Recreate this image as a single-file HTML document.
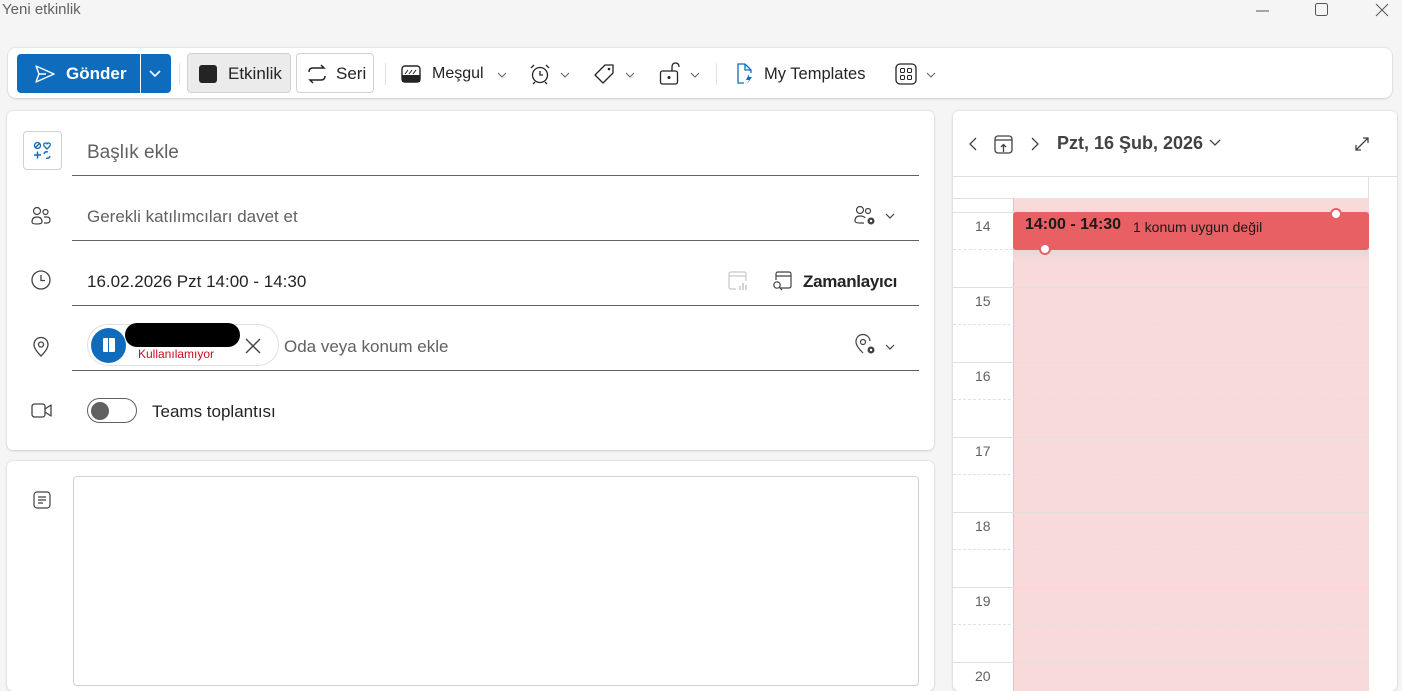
<!DOCTYPE html>
<html><head><meta charset="utf-8"><style>
*{box-sizing:border-box;margin:0;padding:0}
body{width:1402px;height:672px;overflow:hidden;background:#f5f5f5;font-family:"Segoe UI","Liberation Sans",sans-serif;color:#242424;position:relative}
.a{position:absolute}
.card{position:absolute;background:#fff;border-radius:6px;box-shadow:0 0 2px rgba(0,0,0,.15),0 1px 2px rgba(0,0,0,.1)}
.t{position:absolute;white-space:nowrap}
.line{position:absolute;left:72px;width:847px;height:1px;background:#616161}
svg{position:absolute;overflow:visible}
.hr{position:absolute;left:0;width:416px;height:1px;background:#e0e0e0}
.hd{position:absolute;left:60px;width:356px;height:0;border-top:1px dashed #e0e0e0}
.hl{position:absolute;left:22px;font-size:14px;color:#616161}
</style></head><body>
<div class="t" style="left:2px;top:1px;font-size:15px;color:#616161">Yeni etkinlik</div>
<svg style="left:1256px;top:10px" width="14" height="2"><path d="M0 1H13" stroke="#555"/></svg>
<svg style="left:1315px;top:3px" width="14" height="14"><rect x=".5" y=".5" width="12" height="12" rx="2" fill="none" stroke="#555"/></svg>
<svg style="left:1375px;top:3px" width="14" height="14"><path d="M1 1L13 13M13 1L1 13" stroke="#555"/></svg>

<div class="card" style="left:8px;top:48px;width:1384px;height:50px;border-radius:8px"></div>
<div class="a" style="left:17px;top:54px;width:154px;height:39px;background:#0f6cbd;border-radius:4px"></div>
<div class="a" style="left:140px;top:54px;width:1px;height:39px;background:#fff"></div>
<svg style="left:34px;top:64px" width="22" height="20"><path d="M2 2L20 10L2 18L5 10Z M5 10H12" fill="none" stroke="#fff" stroke-width="1.4" stroke-linejoin="round"/></svg>
<div class="t" style="left:66px;top:64px;font-size:17px;font-weight:bold;color:#fff">Gönder</div>
<svg style="left:149px;top:70px" width="12" height="8"><path d="M1 1L6 6L11 1" fill="none" stroke="#fff" stroke-width="1.6"/></svg>
<div class="a" style="left:179px;top:63px;width:1px;height:22px;background:#e0e0e0"></div>
<div class="a" style="left:187px;top:53px;width:104px;height:40px;background:#ebebeb;border:1px solid #d1d1d1;border-radius:4px"></div>
<div class="a" style="left:199px;top:65px;width:18px;height:18px;background:#242424;border-radius:3px"></div>
<div class="t" style="left:228px;top:64px;font-size:17px">Etkinlik</div>
<div class="a" style="left:296px;top:53px;width:78px;height:40px;background:#fff;border:1px solid #d1d1d1;border-radius:4px"></div>
<svg style="left:306px;top:64px" width="22" height="20"><path d="M3 8Q3 4 7 4H18L15 1M19 12Q19 16 15 16H4L7 19" fill="none" stroke="#242424" stroke-width="1.5"/></svg>
<div class="t" style="left:336px;top:64px;font-size:17px">Seri</div>
<div class="a" style="left:385px;top:63px;width:1px;height:22px;background:#e0e0e0"></div>
<svg style="left:401px;top:65px" width="20" height="18"><rect x="1" y="1" width="18" height="16" rx="3" fill="none" stroke="#242424" stroke-width="1.4"/><rect x="1" y="10" width="18" height="7" fill="#242424"/><path d="M4 9L7 5M8 9L11 5M12 9L15 5" stroke="#242424"/></svg>
<div class="t" style="left:432px;top:65px;font-size:16px">Meşgul</div>
<svg style="left:497px;top:72px" width="10" height="6"><path d="M1 1L5 5L9 1" fill="none" stroke="#616161"/></svg>
<svg style="left:529px;top:63px" width="22" height="22"><circle cx="11" cy="12" r="7.5" fill="none" stroke="#242424" stroke-width="1.3"/><path d="M11 8V12H14M2 5L5 2M20 5L17 2M6 19L4 21M16 19L18 21" fill="none" stroke="#242424" stroke-width="1.3"/></svg>
<svg style="left:560px;top:72px" width="10" height="6"><path d="M1 1L5 5L9 1" fill="none" stroke="#616161"/></svg>
<svg style="left:593px;top:63px" width="22" height="22"><path d="M12 2H20V10L10 20L2 12Z" fill="none" stroke="#242424" stroke-width="1.3" stroke-linejoin="round"/><circle cx="16" cy="6" r="1.3" fill="#242424"/></svg>
<svg style="left:625px;top:72px" width="10" height="6"><path d="M1 1L5 5L9 1" fill="none" stroke="#616161"/></svg>
<svg style="left:659px;top:62px" width="22" height="24"><rect x="1.5" y="9" width="17" height="13" rx="2" fill="none" stroke="#242424" stroke-width="1.3"/><path d="M13 9V5Q13 1 16.5 1Q20 1 20 5" fill="none" stroke="#242424" stroke-width="1.3"/><circle cx="10" cy="15.5" r="1.5" fill="#242424"/></svg>
<svg style="left:690px;top:72px" width="10" height="6"><path d="M1 1L5 5L9 1" fill="none" stroke="#616161"/></svg>
<div class="a" style="left:716px;top:63px;width:1px;height:22px;background:#e0e0e0"></div>
<svg style="left:736px;top:63px" width="18" height="22"><path d="M9 1H2V20H8M9 1L15 7V10M9 1V7H15" fill="none" stroke="#0f6cbd" stroke-width="1.3"/><path d="M13 11L10 17H13L11 21L16 14H13Z" fill="#0f6cbd"/></svg>
<div class="t" style="left:764px;top:65px;font-size:16.5px">My Templates</div>
<svg style="left:895px;top:63px" width="22" height="22"><rect x="1" y="1" width="20" height="20" rx="4" fill="none" stroke="#242424" stroke-width="1.3"/><rect x="5.5" y="5.5" width="4" height="4" rx="1" fill="none" stroke="#242424"/><rect x="12.5" y="5.5" width="4" height="4" rx="1" fill="none" stroke="#242424"/><rect x="5.5" y="12.5" width="4" height="4" rx="1" fill="none" stroke="#242424"/><rect x="12.5" y="12.5" width="4" height="4" rx="1" fill="none" stroke="#242424"/></svg>
<svg style="left:926px;top:72px" width="10" height="6"><path d="M1 1L5 5L9 1" fill="none" stroke="#616161"/></svg>

<div class="card" style="left:7px;top:111px;width:927px;height:339px"></div>
<div class="a" style="left:23px;top:131px;width:39px;height:39px;border:1px solid #d1d1d1;border-radius:4px;background:#fff"></div>
<svg style="left:33px;top:141px" width="20" height="20"><circle cx="4.5" cy="4.5" r="3" fill="none" stroke="#0f6cbd" stroke-width="1.3"/><path d="M2.5 6.5L6.5 2.5" stroke="#0f6cbd" stroke-width="1.3"/><path d="M14 8L11 5Q10 2 12.5 2Q14 2 14 3.5Q14 2 15.5 2Q18 2 17 5Z" fill="none" stroke="#0f6cbd" stroke-width="1.3"/><path d="M1 14H8M4.5 10.5V17.5" stroke="#0f6cbd" stroke-width="1.5"/><path d="M11 13Q12 10 15 11M17 15Q16 18 13 17" fill="none" stroke="#0f6cbd" stroke-width="1.4"/></svg>
<div class="t" style="left:87px;top:142px;font-size:19px;color:#616161">Başlık ekle</div>
<div class="line" style="top:175px"></div>
<svg style="left:31px;top:206px" width="24" height="20"><circle cx="6" cy="5" r="3.5" fill="none" stroke="#424242" stroke-width="1.2"/><circle cx="14.5" cy="6" r="2.5" fill="none" stroke="#424242" stroke-width="1.2"/><path d="M1 16Q1 11 6 11Q11 11 11 16Q11 18 6 18Q1 18 1 16Z M13 11H16Q19 11 19 14Q19 17 16 17H13" fill="none" stroke="#424242" stroke-width="1.2"/></svg>
<div class="t" style="left:87px;top:207px;font-size:17px;color:#616161">Gerekli katılımcıları davet et</div>
<svg style="left:854px;top:205px" width="24" height="22"><circle cx="6" cy="5" r="3.5" fill="none" stroke="#424242" stroke-width="1.2"/><circle cx="14" cy="6" r="2.5" fill="none" stroke="#424242" stroke-width="1.2"/><path d="M1 16Q1 11 6 11Q10 11 11 13M10 18H6Q1 18 1 16" fill="none" stroke="#424242" stroke-width="1.2"/><circle cx="17" cy="16" r="3.5" fill="#424242"/><circle cx="17" cy="16" r="1.2" fill="#fff"/></svg>
<svg style="left:885px;top:213px" width="10" height="6"><path d="M1 1L5 5L9 1" fill="none" stroke="#424242" stroke-width="1.2"/></svg>
<div class="line" style="top:240px"></div>
<svg style="left:31px;top:270px" width="22" height="22"><circle cx="10" cy="10" r="9" fill="none" stroke="#424242" stroke-width="1.3"/><path d="M10 5V10.5H14" fill="none" stroke="#424242" stroke-width="1.3"/></svg>
<div class="t" style="left:87px;top:272px;font-size:17px">16.02.2026 Pzt 14:00 - 14:30</div>
<svg style="left:728px;top:271px" width="22" height="22"><path d="M8 18H3Q1 18 1 16V3Q1 1 3 1H16Q18 1 18 3V10M1 5H18" fill="none" stroke="#c8c8c8" stroke-width="1.2"/><path d="M12 19V15M15 19V12M18 19V14" stroke="#c8c8c8" stroke-width="1.6"/></svg>
<svg style="left:772px;top:271px" width="22" height="22"><path d="M8 17H17Q19 17 19 15V3Q19 1 17 1H6Q4 1 4 3V9M4 5H19" fill="none" stroke="#424242" stroke-width="1.2"/><circle cx="5" cy="14" r="3.2" fill="none" stroke="#424242" stroke-width="1.2"/><path d="M7.5 16.5L10 19" stroke="#424242" stroke-width="1.2"/></svg>
<div class="t" style="left:803px;top:272px;font-size:17px;font-weight:bold;color:#242424;letter-spacing:-0.3px">Zamanlayıcı</div>
<div class="line" style="top:305px"></div>
<svg style="left:33px;top:336px" width="18" height="22"><path d="M8 20Q1 13 1 8.5A7 7 0 0 1 15 8.5Q15 13 8 20Z" fill="none" stroke="#424242" stroke-width="1.3"/><circle cx="8" cy="8.5" r="2.5" fill="none" stroke="#424242" stroke-width="1.3"/></svg>
<div class="a" style="left:87px;top:324px;width:192px;height:42px;border:1px solid #e0e0e0;border-radius:21px;background:#fff"></div>
<div class="a" style="left:91px;top:328px;width:35px;height:35px;border-radius:50%;background:#0f6cbd"></div>
<div class="a" style="left:103px;top:338px;width:12px;height:14px;background:#fff;border-radius:1px"></div>
<div class="a" style="left:108px;top:338px;width:1px;height:14px;background:#0f6cbd"></div>
<div class="a" style="left:125px;top:323px;width:115px;height:24px;background:#000;border-radius:12px"></div>
<div class="t" style="left:138px;top:347px;font-size:12px;color:#c50f1f">Kullanılamıyor</div>
<svg style="left:245px;top:338px" width="16" height="16"><path d="M1 1L15 15M15 1L1 15" stroke="#424242" stroke-width="1.4"/></svg>
<div class="t" style="left:284px;top:337px;font-size:17px;color:#616161">Oda veya konum ekle</div>
<svg style="left:855px;top:334px" width="24" height="24"><path d="M8 19Q1 12 1 8A7 7 0 0 1 15 7" fill="none" stroke="#424242" stroke-width="1.2"/><circle cx="8" cy="8" r="2.5" fill="none" stroke="#424242" stroke-width="1.2"/><circle cx="16" cy="16" r="3.5" fill="#424242"/><circle cx="16" cy="16" r="1.2" fill="#fff"/></svg>
<svg style="left:885px;top:344px" width="10" height="6"><path d="M1 1L5 5L9 1" fill="none" stroke="#424242" stroke-width="1.2"/></svg>
<div class="line" style="top:370px"></div>
<svg style="left:31px;top:403px" width="22" height="16"><rect x="1" y="1" width="13" height="13" rx="2.5" fill="none" stroke="#424242" stroke-width="1.3"/><path d="M14 6L20 2V13L14 9" fill="none" stroke="#424242" stroke-width="1.3" stroke-linejoin="round"/></svg>
<div class="a" style="left:87px;top:398px;width:50px;height:25px;border:1px solid #616161;border-radius:13px"></div>
<div class="a" style="left:91px;top:402px;width:18px;height:18px;border-radius:50%;background:#616161"></div>
<div class="t" style="left:152px;top:402px;font-size:17px">Teams toplantısı</div>

<div class="card" style="left:7px;top:461px;width:927px;height:230px"></div>
<svg style="left:33px;top:491px" width="18" height="18"><rect x="1" y="1" width="16" height="16" rx="3" fill="none" stroke="#424242" stroke-width="1.2"/><path d="M5 6H13M5 9H13M5 12H10" stroke="#424242" stroke-width="1.2"/></svg>
<div class="a" style="left:73px;top:476px;width:846px;height:210px;border:1px solid #d1d1d1;border-radius:4px"></div>

<div class="card" style="left:953px;top:111px;width:444px;height:580px;overflow:hidden">
<svg style="left:16px;top:26px" width="8" height="14"><path d="M7 1L1 7L7 13" fill="none" stroke="#424242" stroke-width="1.3"/></svg>
<svg style="left:41px;top:24px" width="20" height="20"><rect x="1" y="1" width="17" height="17" rx="3" fill="none" stroke="#424242" stroke-width="1.3"/><path d="M1 5H18M9.5 17V10M7 12L9.5 9.5L12 12" fill="none" stroke="#424242" stroke-width="1.3"/></svg>
<svg style="left:78px;top:26px" width="8" height="14"><path d="M1 1L7 7L1 13" fill="none" stroke="#424242" stroke-width="1.3"/></svg>
<div class="t" style="left:104px;top:22px;font-size:18px;font-weight:bold;color:#424242">Pzt, 16 Şub, 2026</div>
<svg style="left:256px;top:28px" width="12" height="8"><path d="M1 1L6 6L11 1" fill="none" stroke="#424242" stroke-width="1.3"/></svg>
<svg style="left:402px;top:26px" width="14" height="14"><path d="M1 13L13 1M8 1H13V6M1 8V13H6" fill="none" stroke="#424242" stroke-width="1.3"/></svg>
<div class="hr" style="top:65px;width:444px"></div>
<div class="a" style="left:415px;top:65px;width:1px;height:520px;background:#e0e0e0"></div>
<div class="a" style="left:60px;top:87px;width:356px;height:500px;background:#f8dadb;border-left:1px solid #e8c0c2"></div>
<div class="hr" style="top:87px;left:0;width:60px"></div>
<div class="hr" style="top:101px"></div><div class="hl" style="top:107px">14</div>
<div class="hd" style="top:138px;left:0;width:60px"></div>
<div class="hr" style="top:176px"></div><div class="hl" style="top:182px">15</div><div class="hd" style="top:213px;left:0;width:416px"></div>
<div class="hr" style="top:251px"></div><div class="hl" style="top:257px">16</div><div class="hd" style="top:288px;left:0;width:416px"></div>
<div class="hr" style="top:326px"></div><div class="hl" style="top:332px">17</div><div class="hd" style="top:363px;left:0;width:416px"></div>
<div class="hr" style="top:401px"></div><div class="hl" style="top:407px">18</div><div class="hd" style="top:438px;left:0;width:416px"></div>
<div class="hr" style="top:476px"></div><div class="hl" style="top:482px">19</div><div class="hd" style="top:513px;left:0;width:416px"></div>
<div class="hr" style="top:551px"></div><div class="hl" style="top:557px">20</div>
<div class="a" style="left:60px;top:139px;width:356px;height:12px;background:linear-gradient(#ead6d7,#f8dadb)"></div>
<div class="a" style="left:60px;top:101px;width:356px;height:38px;background:#e85f64;border-radius:3px"></div>
<div class="t" style="left:72px;top:105px;font-size:16px;font-weight:bold;color:#1a1a1a">14:00 - 14:30</div>
<div class="t" style="left:180px;top:108px;font-size:14px;color:#1a1a1a">1 konum uygun değil</div>
<div class="a" style="left:377px;top:97px;width:12px;height:12px;border-radius:50%;background:#fff;border:2px solid #e85f64"></div>
<div class="a" style="left:86px;top:132px;width:12px;height:12px;border-radius:50%;background:#fff;border:2px solid #e85f64"></div>
</div>
</body></html>
